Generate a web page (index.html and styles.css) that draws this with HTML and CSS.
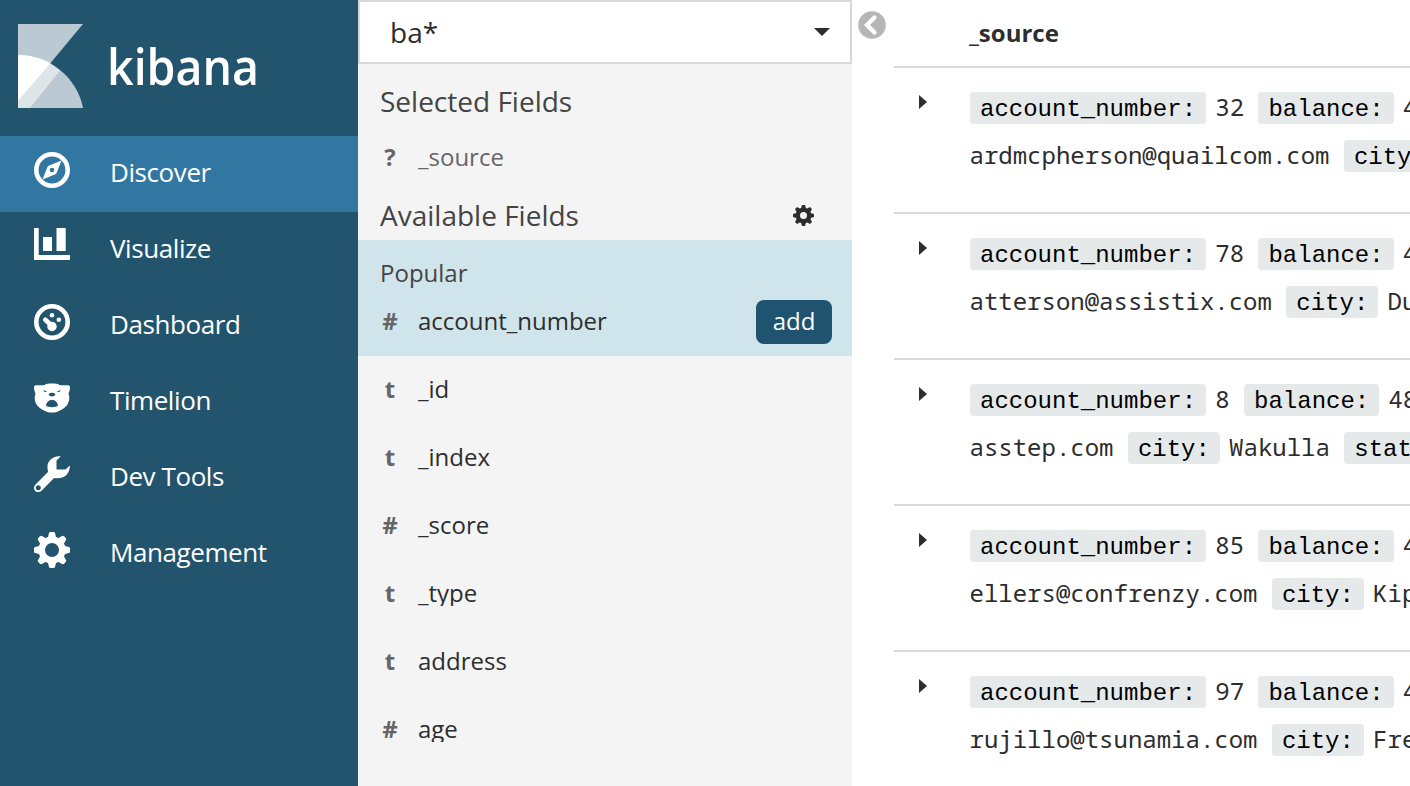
FILE: index.html
```html
<!DOCTYPE html>
<html lang="en">
<head>
<meta charset="utf-8">
<title>Kibana</title>
<link rel="stylesheet" href="styles.css">
</head>
<body>
<div class="app">
  <nav class="nav">
    <div class="brand">
      <svg class="brand-mark" width="65" height="84" viewBox="0 0 65 84">
        <path fill="#bbc9d2" d="M0 0H65L32.500 39L0 77Z"/>
        <path fill="#bbc9d2" d="M0 31C31 31 59 53 65 84H0Z"/>
        <path fill="#dde5e8" d="M0 31C15.500 31 30 36.500 42 46.500L12 84H0Z"/>
        <path fill="#fff" d="M0 31C11.500 31 22.500 34 32.500 39L0 77Z"/>
      </svg>
      <svg class="brand-name" width="160" height="60" viewBox="0 0 160 60"><text x="0" y="45" textLength="152" lengthAdjust="spacingAndGlyphs">kibana</text></svg>
    </div>
    <a class="nav-item active"><svg class="nav-icon" viewBox="0 0 36 36"><circle cx="18" cy="18" r="15.700" fill="none" stroke="#fff" stroke-width="4.600"/><path fill="#fff" fill-rule="evenodd" d="M27.500 8.500L22.800 20.500Q22.400 21.600 21.400 22.200L8.500 27.500L13.200 15.500Q13.600 14.400 14.600 13.800ZM18 15.700a2.300 2.300 0 1 0 0 4.600a2.300 2.300 0 1 0 0-4.600Z"/></svg><span>Discover</span></a>
    <a class="nav-item"><svg class="nav-icon" viewBox="0 0 36 36"><path fill="#fff" d="M0 0H4.700V27H36V32H0ZM9 9H18V23H9ZM22.500 0H31.700V23H22.500Z"/></svg><span>Visualize</span></a>
    <a class="nav-item"><svg class="nav-icon" viewBox="0 0 36 36"><circle cx="18" cy="18" r="15.700" fill="none" stroke="#fff" stroke-width="4.600"/><g fill="#fff"><circle cx="18" cy="22.500" r="4.700"/><circle cx="18" cy="11.300" r="2.300"/><circle cx="24.800" cy="15.700" r="2.300"/></g><path d="M11.300 15.700L17 21" stroke="#fff" stroke-width="4.600" stroke-linecap="round"/></svg><span>Dashboard</span></a>
    <a class="nav-item"><svg class="nav-icon" viewBox="0 -3.500 36 36"><path fill="#fff" fill-rule="evenodd" d="M0 3.500C0 2.200 1 1.700 2.500 1.700H10C12 .2 15 0 18 0S24 .2 26 1.700H33.500C35 1.700 36 2.200 36 3.500C36 6 35.400 8 34.500 10C36 14 35.300 18 33.500 21C31.500 24 28.500 26 25 27.500C23 28.600 21 29 18 29S13 28.600 11 27.500C7.500 26 4.500 24 2.500 21C.7 18 0 14 1.500 10C.6 8 0 6 0 3.500ZM9.500 6.500C9.800 8.800 12 9 13 8.200ZM26.500 6.500C26.200 8.800 24 9 23 8.200ZM14.500 10.700Q18 7.800 21.500 10.700Q20.500 13 18 13T14.500 10.700ZM12 22C12.500 18.500 15 16.500 18 16.500S23.500 18.500 24 22C22.500 24.200 13.500 24.200 12 22Z"/></svg><span>Timelion</span></a>
    <a class="nav-item"><svg class="nav-icon" viewBox="0 0 36 36"><path fill="#fff" fill-rule="evenodd" d="M26.700 .4C19 -.8 13 5.500 13.500 11C13.500 13 14 15 14 16L1.500 28.500C-.7 30.800-.3 33.500 1.200 35C3 36.700 6 36.300 7.800 34.500L20 22C29 23.500 35.500 19.500 36 9.500L31.500 13.500H22.500V4.500ZM4.300 29.300a2.500 2.500 0 1 1 0 5a2.500 2.500 0 1 1 0-5Z"/></svg><span>Dev Tools</span></a>
    <a class="nav-item"><svg class="nav-icon" viewBox="0 0 36 36"><use href="#gear" fill="#fff"/></svg><span>Management</span></a>
  </nav>

  <aside class="fields">
    <div class="pattern">ba*<svg width="16" height="8" viewBox="0 0 16 8"><path fill="#2d2d2d" d="M0 0H16L8 8Z"/></svg></div>
    <h2 class="heading selected">Selected Fields</h2>
    <div class="field chosen"><b>?</b><span>_source</span></div>
    <h2 class="heading available">Available Fields<svg width="21" height="21" viewBox="0 0 36 36"><use href="#gear" fill="#2d2d2d"/><circle cx="18" cy="18" r="8" fill="none" stroke="#2d2d2d" stroke-width="4"/></svg></h2>
    <div class="popular">
      <div class="popular-title">Popular</div>
      <div class="field"><b>#</b><span>account_number</span><button class="add">add</button></div>
    </div>
    <div class="field"><b>t</b><span>_id</span></div>
    <div class="field"><b>t</b><span>_index</span></div>
    <div class="field"><b>#</b><span>_score</span></div>
    <div class="field"><b>t</b><span>_type</span></div>
    <div class="field"><b>t</b><span>address</span></div>
    <div class="field"><b>#</b><span>age</span></div>
  </aside>

  <main class="results">
    <svg class="collapse" width="28" height="28" viewBox="0 0 28 28"><circle cx="14" cy="14" r="13.800" fill="#b6b6b6"/><path d="M16.500 6.500L9 14L16.500 21.500" fill="none" stroke="#fff" stroke-width="4.300" stroke-linecap="round"/></svg>
    <div class="table">
      <div class="table-head">_source</div>
      <div class="row"><i class="caret"></i><div class="doc"><div><code>account_number:</code><span>32</span><code>balance:</code><span>48086</span></div><div><span class="first">ardmcpherson@quailcom.com</span><code>city:</code></div></div></div>
      <div class="row"><i class="caret"></i><div class="doc"><div><code>account_number:</code><span>78</span><code>balance:</code><span>48656</span></div><div><span class="first">atterson@assistix.com</span><code>city:</code><span>Dunlo</span></div></div></div>
      <div class="row"><i class="caret"></i><div class="doc"><div><code>account_number:</code><span>8</span><code>balance:</code><span>48868</span></div><div><span class="first">asstep.com</span><code>city:</code><span>Wakulla</span><code>state:</code></div></div></div>
      <div class="row"><i class="caret"></i><div class="doc"><div><code>account_number:</code><span>85</span><code>balance:</code><span>48735</span></div><div><span class="first">ellers@confrenzy.com</span><code>city:</code><span>Kipp</span></div></div></div>
      <div class="row"><i class="caret"></i><div class="doc"><div><code>account_number:</code><span>97</span><code>balance:</code><span>49671</span></div><div><span class="first">rujillo@tsunamia.com</span><code>city:</code><span>Fredo</span></div></div></div>
    </div>
  </main>
</div>
<svg class="defs" width="0" height="0"><defs>
  <path id="gear" fill-rule="evenodd" d="M15 1Q15.300 0 16.500 0H19.500Q20.700 0 21 1L22 5L24.500 6L28 4Q29 3.400 30 4.200L31.800 6Q32.600 7 32 8L30 11.500L31 14L35 15Q36 15.300 36 16.500V19.500Q36 20.700 35 21L31 22L30 24.500L32 28Q32.600 29 31.800 30L30 31.800Q29 32.600 28 32L24.500 30L22 31L21 35Q20.700 36 19.500 36H16.500Q15.300 36 15 35L14 31L11.500 30L8 32Q7 32.600 6 31.800L4.200 30Q3.400 29 4 28L6 24.500L5 22L1 21Q0 20.700 0 19.500V16.500Q0 15.300 1 15L5 14L6 11.500L4 8Q3.400 7 4.200 6L6 4.200Q7 3.400 8 4L11.500 6L14 5ZM18 11a7 7 0 1 0 0 14a7 7 0 1 0 0-14Z"/>
</defs></svg>
</body>
</html>
```
FILE: styles.css
```css
* { box-sizing: border-box; }
body { margin: 0; overflow: hidden; font-family: "Open Sans", "Noto Sans", sans-serif; color: #2d2d2d; background: #fff; }
.defs { display: block; }
.app { display: flex; height: 786px; overflow: hidden; }

.nav { flex: 0 0 358px; background: #22546e; }
.brand { display: flex; height: 136px; padding: 24px 0 0 18px; }
.brand-mark { display: block; }
.brand-name { margin: 16px 0 0 24px; }
.brand-name text { font-family: "Open Sans", sans-serif; font-size: 50px; font-weight: 600; fill: #fff; }
.nav-item { display: flex; height: 76px; padding-left: 34px; line-height: 72px; font-size: 26px; letter-spacing: -0.42px; color: #fff; }
.nav-item.active { background: #3177a2; }
.nav-icon { width: 36px; height: 36px; margin: 16px 40px 0 0; }

.fields { flex: 0 0 494px; background: #f4f4f4; }
.pattern { display: flex; align-items: center; justify-content: space-between; height: 64px; padding: 0 20px 0 30px; border: 2px solid #d9d9d9; background: #fff; font-size: 28px; line-height: 58px; }
.heading { margin: 0; padding-left: 22px; font-size: 28px; font-weight: 400; color: #444; }
.selected { height: 60px; line-height: 74px; }
.available { display: flex; align-items: center; justify-content: space-between; height: 48px; padding: 0 38px 2px 22px; }
.field { display: flex; align-items: center; height: 68px; padding: 0 20px 0 22px; font-size: 24px; }
.field b { width: 20px; margin-right: 18px; padding-bottom: 3px; text-align: center; color: #666; }
.field span { flex: 1; height: 24px; line-height: 22px; overflow: hidden; }
.field.chosen span { color: #666; }
.popular { height: 116px; background: #d0e4eb; }
.popular-title { height: 48px; padding-left: 22px; line-height: 66px; font-size: 24px; color: #444; }
.add { width: 76px; height: 44px; padding: 0 0 3px; border: 0; border-radius: 8px; background: #20536f; color: #fff; font-family: inherit; font-size: 24px; }

.results { flex: 1; display: flex; min-width: 0; overflow: hidden; }
.collapse { flex: none; margin: 11px 8px 0 6px; }
.table { flex: 1; min-width: 0; overflow: hidden; }
.table-head { height: 68px; padding-left: 75px; border-bottom: 2px solid #d9d9d9; line-height: 66px; font-size: 24px; font-weight: 700; }
.row { display: flex; height: 146px; padding-top: 16px; border-bottom: 2px solid #d9d9d9; }
.row:last-child { border-bottom: 0; }
.caret { flex: none; width: 8px; height: 14px; margin: 11px 43px 0 25px; background: #2d2d2d; clip-path: polygon(0 0, 100% 50%, 0 100%); }
.doc { white-space: nowrap; }
.doc > div { display: flex; align-items: center; height: 48px; font-size: 24px; }
.doc code { height: 32px; padding: 0 10px; border-radius: 4px; background: #e6e9ea; color: #000; font-family: "Liberation Mono", monospace; font-size: 24px; line-height: 36px; }
.doc span { margin: 0 14.4px 0 9.2px; padding-bottom: 3px; font-family: "Noto Sans Mono", "DejaVu Sans Mono", monospace; font-size: 24px; }
.doc .first { margin-left: -0.5px; }
```
